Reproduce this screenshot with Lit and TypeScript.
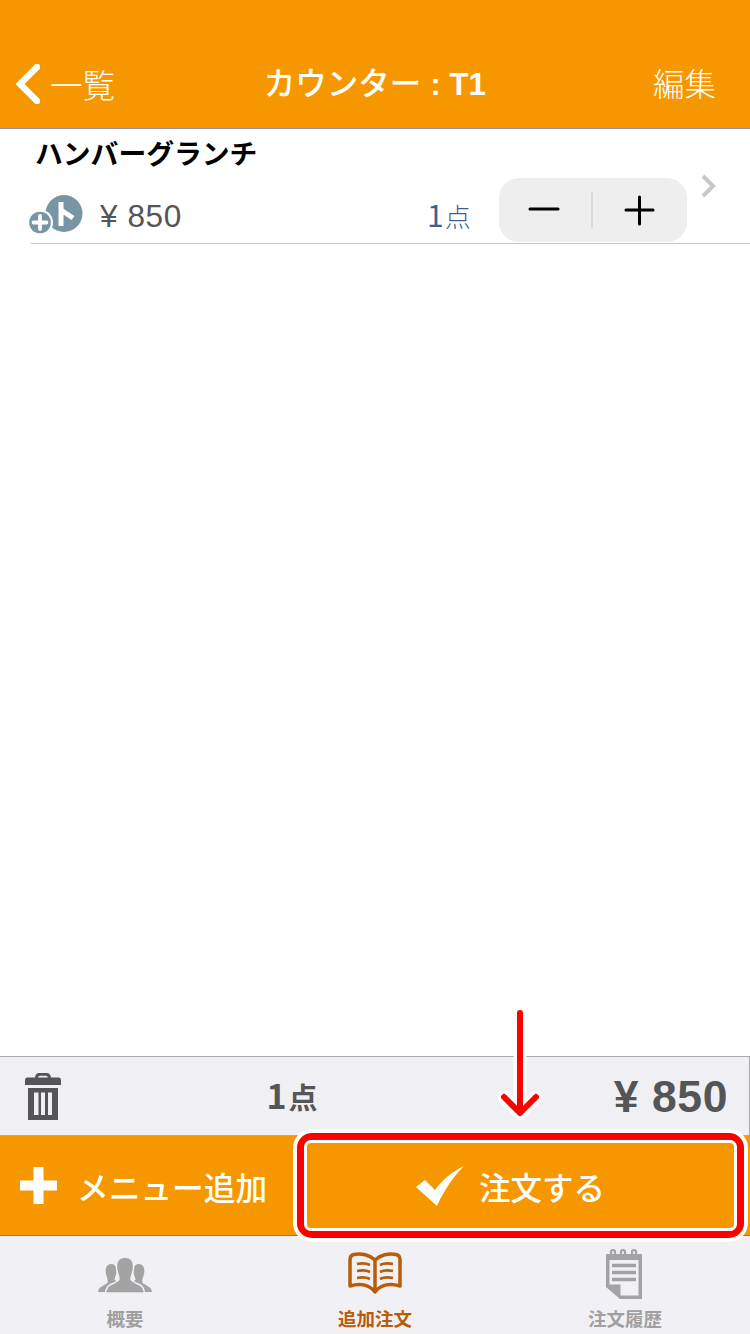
import { LitElement, html, css } from "lit";
import { customElement } from "lit/decorators.js";

@customElement("app-root")
export class AppRoot extends LitElement {
  static styles = css`
    :host {
      display: block;
      position: relative;
      width: 750px;
      height: 1334px;
      overflow: hidden;
      background: #fff;
      font-family: "Noto Sans CJK JP", "Liberation Sans", sans-serif;
    }
    .page { display: flex; flex-direction: column; height: 1334px; }
    .header {
      box-sizing: border-box; background: #f79700; color: #fff; flex: none;
      display: flex; align-items: flex-end; padding: 0 34px 21px 16px;
      justify-content: space-between; border-bottom: 1px solid #8f93a3;
      height: 129px; font-size: 31.500px; line-height: 46px;
    }
    .back { display: flex; align-items: center; gap: 10px; width: 164px; font-weight: 300; font-size: 32.500px; }
    .back svg { display: block; }
    .title { font-weight: 500; font-size: 31.500px; white-space: nowrap; display: flex; align-items: baseline; }
    .title b { font-family: "Liberation Sans", sans-serif; font-weight: 700; font-size: 31.500px; white-space: pre; }
    .edit { width: 146px; text-align: right; font-weight: 300; padding-bottom: 2px; }
    .list { flex: 1; }
    .row { margin-left: 31px; height: 115px; box-sizing: border-box; border-bottom: 1px solid #c8c8c8; display: flex; flex-direction: column; padding: 2px 0 0 6px; position: relative; }
    .name { font-size: 27.800px; font-weight: 700; color: #000; line-height: 42px; white-space: nowrap; margin-left: -2px; }
    .line { display: flex; align-items: center; margin-top: 5px; height: 64px; }
    .badge { margin-left: -8px; display: block; align-self: flex-start; margin-top: 17px; flex: none; }
    .price { font-size: 31.500px; color: #555; margin-left: 17px; width: 327px; font-family: "Liberation Sans", sans-serif; letter-spacing: 0.6px; padding-top: 12px; box-sizing: border-box; white-space: nowrap; }
    .count { color: #3f5f93; font-size: 30px; display: flex; align-items: baseline; white-space: nowrap; font-weight: 400; padding-top: 7px; width: 72px; flex: none; }
    .count small { font-size: 26px; margin-left: 1px; font-weight: 300; }
    .stepper { width: 188px; height: 64px; border-radius: 20px; background: #eeeeef; flex: none; }
    .stepper svg { display: block; }
    .chev { position: absolute; left: 668px; top: 44px; display: block; }
    .summary {
      height: 79px; flex: none; box-sizing: border-box; background: #efeff4; border-top: 1px solid #a9a9a9; border-right: 1px solid #a9a9a9;
      display: grid; grid-template-columns: 200px 136px 1fr; align-items: center; color: #555; padding: 0 21px 0 24px;
    }
    .summary svg { display: block; }
    .qty { font-weight: 700; font-size: 34px; text-align: center; white-space: nowrap; padding-bottom: 4px; }
    .qty span { font-size: 29px; margin-left: 2px; }
    .total { font-weight: 700; font-size: 44.500px; letter-spacing: 0.6px; text-align: right; white-space: nowrap; font-family: "Liberation Sans", sans-serif; padding-top: 2px; }
    .actions { height: 101px; flex: none; box-sizing: border-box; display: flex; background: #f79700; border-top: 1px solid #b0a898; border-bottom: 1px solid #b5750c; color: #fff; }
    .add { width: 294px; display: flex; align-items: center; padding-left: 20px; box-sizing: border-box; gap: 20px; font-size: 31.700px; font-weight: 500; white-space: nowrap; }
    .add svg, .order svg { display: block; flex: none; }
    .order { flex: 1; display: flex; align-items: center; justify-content: center; gap: 15px; font-size: 31.500px; font-weight: 500; padding-right: 23px; white-space: nowrap; }
    .tabs { height: 98px; flex: none; background: #f0f0f5; display: grid; grid-template-columns: 1fr 1fr 1fr; }
    .tab { display: flex; flex-direction: column; align-items: center; color: #a0a0a0; font-size: 18.500px; font-weight: 700; line-height: 24px; white-space: nowrap; position: relative; }
    .tab svg { display: block; }
    .tab .label { position: absolute; top: 70px; }
    .tab.active { color: #b85c08; }
    .i-people { margin-top: 21px; }
    .i-book { margin-top: 16px; }
    .i-note { margin-top: 12px; margin-left: -2px; }
    .hl {
      position: absolute; left: 297px; top: 1133px; width: 447px; height: 105px; box-sizing: border-box;
      border-radius: 15px; border: 7px solid #f00; box-shadow: 0 0 0 4px #fff; pointer-events: none;
    }
    .hl::after { content: ""; position: absolute; inset: 0; border: 3px solid #fff; border-radius: 7px; }
    .arrow { position: absolute; left: 490px; top: 1000px; display: block; pointer-events: none; }
  `;

  render() {
    return html`
      <div class="page">
        <div class="header">
          <div class="back">
            <svg width="24" height="40" viewBox="0 0 24 40"><path d="M21 3 L4 20 L21 37" fill="none" stroke="#fff" stroke-width="6.500" stroke-linecap="round"/></svg>
            <span>一覧</span>
          </div>
          <div class="title">カウンター<b> : T1</b></div>
          <div class="edit">編集</div>
        </div>
        <div class="list">
          <div class="row">
            <div class="name">ハンバーグランチ</div>
            <div class="line">
              <svg class="badge" width="54" height="40" viewBox="0 0 54 40">
                <circle cx="35" cy="18.500" r="18.500" fill="#7795a5"/>
                <path d="M32 7 V31 M32 15 L44 23" fill="none" stroke="#fff" stroke-width="5"/>
                <circle cx="11" cy="27.500" r="13" fill="#fff"/>
                <circle cx="11" cy="27.500" r="10.800" fill="#7795a5"/>
                <path d="M4.500 27.500 H17.500 M11 21 V34" stroke="#fff" stroke-width="3.800" stroke-linecap="round"/>
              </svg>
              <div class="price">¥ 850</div>
              <div class="count">1<small>点</small></div>
              <div class="stepper">
                <svg width="188" height="64" viewBox="0 0 188 64">
                  <path d="M31 31 H59 M127 32 H154 M140.500 19 V46" stroke="#000" stroke-width="3" fill="none" stroke-linecap="round"/>
                  <path d="M93 14 V50" stroke="#d8d8d8" stroke-width="2"/>
                </svg>
              </div>
            </div>
            <svg class="chev" width="20" height="26" viewBox="0 0 20 26"><path d="M4 3 L14 13 L4 23" fill="none" stroke="#c8c8c8" stroke-width="4"/></svg>
          </div>
        </div>
        <div class="summary">
          <svg width="38" height="49" viewBox="0 0 38 49" fill="#555">
            <path d="M11 7 C11 2 13 1 16 1 H22 C25 1 27 2 27 7 H24 C24 4.500 23.500 3.800 22 3.800 H16 C14.500 3.800 14 4.500 14 7 Z"/>
            <path d="M3 5.500 H35 Q37 5.500 37 8 V13 H1 V8 Q1 5.500 3 5.500Z"/>
            <path fill-rule="evenodd" d="M4 16 H34 V48 H4 Z M10 20.500 V43 H14.500 V20.500 Z M17 20.500 V43 H21 V20.500 Z M24 20.500 V43 H28 V20.500 Z"/>
          </svg>
          <div class="qty">1<span>点</span></div>
          <div class="total">¥ 850</div>
        </div>
        <div class="actions">
          <div class="add">
            <svg width="37" height="37" viewBox="0 0 37 37"><path d="M18.500 0 V37 M0 18.500 H37" stroke="#fff" stroke-width="10"/></svg>
            <span>メニュー追加</span>
          </div>
          <div class="order">
            <svg width="48" height="40" viewBox="0 0 48 40"><path d="M0 21 L9 14 L19 24 C26 14 36 6 48 0 C38 10 28 24 21 40 Z" fill="#fff"/></svg>
            <span>注文する</span>
          </div>
        </div>
        <div class="tabs">
          <div class="tab">
            <svg class="i-people" width="54" height="36" viewBox="0 0 54 36" fill="#a3a3a3">
              <path d="M13 7 C17 7 19 10 18.500 15 C18 19 16.500 21 16.500 23 L20 25 L9 35 H0 C0.500 31 3 30 6 28 L9.500 26 C10 24 9.500 21 8.500 19 C6.500 13 8 7 13 7 Z"/>
              <path d="M41 7 C37 7 35 10 35.500 15 C36 19 37.500 21 37.500 23 L34 25 L45 35 H54 C53.500 31 51 30 48 28 L44.500 26 C44 24 44.500 21 45.500 19 C47.500 13 46 7 41 7 Z"/>
              <path d="M27 0 C33 0 36 4 35.500 11 C35 16 33 19 33 22 C33 24 38 26 42 28 C45 29.500 46 32 46.500 36 H7.500 C8 32 9 29.500 12 28 C16 26 21 24 21 22 C21 19 19 16 18.500 11 C18 4 21 0 27 0 Z" stroke="#f0f0f5" stroke-width="1.500"/>
            </svg>
            <span class="label">概要</span>
          </div>
          <div class="tab active">
            <svg class="i-book" width="54" height="42" viewBox="0 0 54 42" fill="none" stroke="#b85c08" stroke-width="3.500" stroke-linejoin="round">
              <path d="M27 8 C22 3 13 1 6 2.500 C3.500 3 2 5 2 8 V34 C11 31 21 32 27 40 C33 32 43 31 52 34 V8 C52 5 50.500 3 48 2.500 C41 1 32 3 27 8 Z M27 8 V40"/>
              <path d="M9 12 C14 11 18 11 22 13 M9 19 C14 18 18 18 22 20 M9 26 C14 25 18 25 22 27 M32 13 C36 11 40 11 45 12 M32 20 C36 18 40 18 45 19 M32 27 C36 25 40 25 45 26" stroke-width="2.800"/>
            </svg>
            <span class="label">追加注文</span>
          </div>
          <div class="tab">
            <svg class="i-note" width="38" height="52" viewBox="0 0 38 52">
              <path fill-rule="evenodd" fill="#a3a3a3" d="M1 6 H37 V51 H15 L1 39 Z M4.500 12 V36.500 H15.500 V47.500 H33.500 V12 Z"/>
              <path d="M6 9 V3.500 C6 1.500 10 1.500 10 3.500 V9 M16 9 V3.500 C16 1.500 20 1.500 20 3.500 V9 M27 9 V3.500 C27 1.500 31 1.500 31 3.500 V9" fill="none" stroke="#a3a3a3" stroke-width="2.200"/>
              <path d="M7 17.500 H31 M7 24.500 H31 M7 31.500 H31" stroke="#a3a3a3" stroke-width="3.500"/>
            </svg>
            <span class="label">注文履歴</span>
          </div>
        </div>
      </div>
      <div class="hl"></div>
      <svg class="arrow" width="60" height="125" viewBox="0 0 60 125" fill="none" stroke-linecap="round" stroke-linejoin="round">
        <path d="M30 13 V113 M14 97 L30 113 L46 97" stroke="#fff" stroke-width="13"/>
        <path d="M30 13 V113 M14 97 L30 113 L46 97" stroke="#f00" stroke-width="6"/>
      </svg>
    `;
  }
}
